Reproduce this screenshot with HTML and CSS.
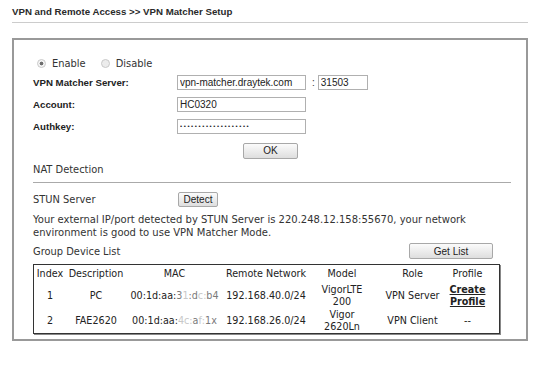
FILE: index.html
```html
<!DOCTYPE html>
<html>
<head>
<meta charset="utf-8">
<title>VPN Matcher Setup</title>
<link rel="stylesheet" href="styles.css">
</head>
<body>
<div class="page">
  <h1 class="title">VPN and Remote Access &gt;&gt; VPN Matcher Setup</h1>
  <div class="box">
    <div class="radios">
      <span class="radio checked"></span><span class="rlabel">Enable</span>
      <span class="radio"></span><span class="rlabel">Disable</span>
    </div>
    <div class="form">
      <div class="label">VPN Matcher Server:</div>
      <div class="field"><input class="text" type="text" value="vpn-matcher.draytek.com"><span class="colon">:</span><input class="text port" type="text" value="31503"></div>
      <div class="label">Account:</div>
      <div class="field"><input class="text" type="text" value="HC0320"></div>
      <div class="label">Authkey:</div>
      <div class="field"><input class="text pass" type="password" value="abcdefghijklmnopqrs"></div>
    </div>
    <div class="ok-row"><button class="btn ok">OK</button></div>
    <div class="section">NAT Detection</div>
    <div class="stun"><span>STUN Server</span><button class="btn detect">Detect</button></div>
    <p class="msg">Your external IP/port detected by STUN Server is 220.248.12.158:55670, your network environment is good to use VPN Matcher Mode.</p>
    <div class="group"><span>Group Device List</span><button class="btn getlist">Get List</button></div>
    <div class="table">
      <div class="th">Index</div>
      <div class="th">Description</div>
      <div class="th">MAC</div>
      <div class="th">Remote Network</div>
      <div class="th">Model</div>
      <div class="th">Role</div>
      <div class="th">Profile</div>
      <div class="th"></div>

      <div class="td">1</div>
      <div class="td">PC</div>
      <div class="td">00:1d:aa:<span class="mid">3</span><span class="faint">1</span><span class="mid">:</span><span class="mid">d</span><span class="faint">c</span><span class="faint">:</span><span class="mid">b4</span></div>
      <div class="td">192.168.40.0/24</div>
      <div class="td">VigorLTE<br>200</div>
      <div class="td">VPN Server</div>
      <div class="td"><a class="link" href="#">Create<br>Profile</a></div>
      <div class="td"></div>

      <div class="td">2</div>
      <div class="td">FAE2620</div>
      <div class="td">00:1d:aa:<span class="faint">4c</span><span class="faint">:</span><span class="mid">a</span><span class="faint">f</span><span class="faint">:</span><span class="mid">1x</span></div>
      <div class="td">192.168.26.0/24</div>
      <div class="td">Vigor<br>2620Ln</div>
      <div class="td">VPN Client</div>
      <div class="td">--</div>
      <div class="td"></div>
    </div>
  </div>
</div>
</body>
</html>
```
FILE: styles.css
```css
body {
  margin: 0;
  background: #fff;
  font-family: "DejaVu Sans", Verdana, sans-serif;
  color: #333;
}

.page {
  padding: 5px 23px 0 12px;
}

.title {
  margin: 0;
  font: bold 9.7px/14px "Liberation Sans", Arial, sans-serif;
  color: #2a2a2a;
  padding-bottom: 3px;
  border-bottom: 1px solid #ccc;
}

.box {
  margin-top: 15px;
  border: 2px solid #999;
  padding: 15px 15px 5px 19px;
}

.radios {
  display: flex;
  align-items: center;
  height: 16px;
  font-size: 9.9px;
}

.radio {
  box-sizing: border-box;
  width: 9px;
  height: 9px;
  border-radius: 50%;
  border: 1px solid #c9c9c9;
  background: #ececec;
  margin-left: 4px;
  margin-right: 6px;
}

.radio.checked {
  background: radial-gradient(circle, #6e6e6e 0 1.6px, #f4f4f4 2.2px);
}

.rlabel {
  margin-right: 11px;
}

.form {
  display: grid;
  grid-template-columns: 144px auto;
  grid-auto-rows: 22px;
  align-items: center;
}

.label {
  font: bold 9.7px "Liberation Sans", Arial, sans-serif;
  color: #222;
}

.field {
  display: flex;
  align-items: center;
}

.text {
  box-sizing: border-box;
  width: 129px;
  height: 15px;
  margin: 0;
  border: 1px solid #b0b0b0;
  padding: 0 2px;
  font: 10px "Liberation Sans", Arial, sans-serif;
  color: #222;
  background: #fff;
  outline: none;
}

.text.port {
  width: 50px;
}

.text.pass {
  font-size: 6px;
  letter-spacing: 1.6px;
}

.colon {
  margin: 0 3px 0 6px;
  font: 10px "Liberation Sans", Arial, sans-serif;
  color: #333;
}

.ok-row {
  margin-top: 2px;
  padding-left: 210px;
  height: 16px;
}

.btn {
  box-sizing: border-box;
  height: 16px;
  margin: 0;
  padding: 0;
  border: 1px solid #a8a8a8;
  border-radius: 2px;
  background: linear-gradient(#fbfbfb, #dedede);
  font: 10px "Liberation Sans", Arial, sans-serif;
  color: #222;
}

.btn.ok {
  width: 55px;
}

.btn.detect {
  width: 40px;
  height: 15px;
}

.btn.getlist {
  width: 84px;
}

.section {
  margin-top: 8px;
  line-height: 14px;
  padding-bottom: 5px;
  border-bottom: 1px solid #aaa;
  font-size: 9.9px;
}

.stun {
  display: grid;
  grid-template-columns: 145px auto;
  align-items: center;
  margin-top: 9px;
  height: 15px;
  font-size: 9.9px;
}

.msg {
  margin: 6px 0 0;
  line-height: 13px;
  font-size: 10px;
}

.group {
  display: flex;
  justify-content: space-between;
  align-items: center;
  margin-top: 4px;
  height: 16px;
  padding-right: 18px;
  font-size: 9.9px;
}

.table {
  margin-top: 5px;
  width: 467px;
  box-sizing: border-box;
  border: 1px solid #333;
  box-shadow: 1px 1px 0 #888;
  display: grid;
  grid-template-columns: 32px 60px 97px 86px 66px 75px 35px 1fr;
  font-size: 9.6px;
  color: #222;
}

.th {
  height: 18px;
  line-height: 18px;
  text-align: center;
  white-space: nowrap;
}

.td {
  height: 25px;
  display: flex;
  align-items: center;
  justify-content: center;
  text-align: center;
  line-height: 12px;
  white-space: nowrap;
}

.mid {
  color: #7a7a7a;
}

.faint {
  color: #c8c8c8;
}

.link {
  color: #222;
  font-weight: bold;
  text-decoration: underline;
}
```
